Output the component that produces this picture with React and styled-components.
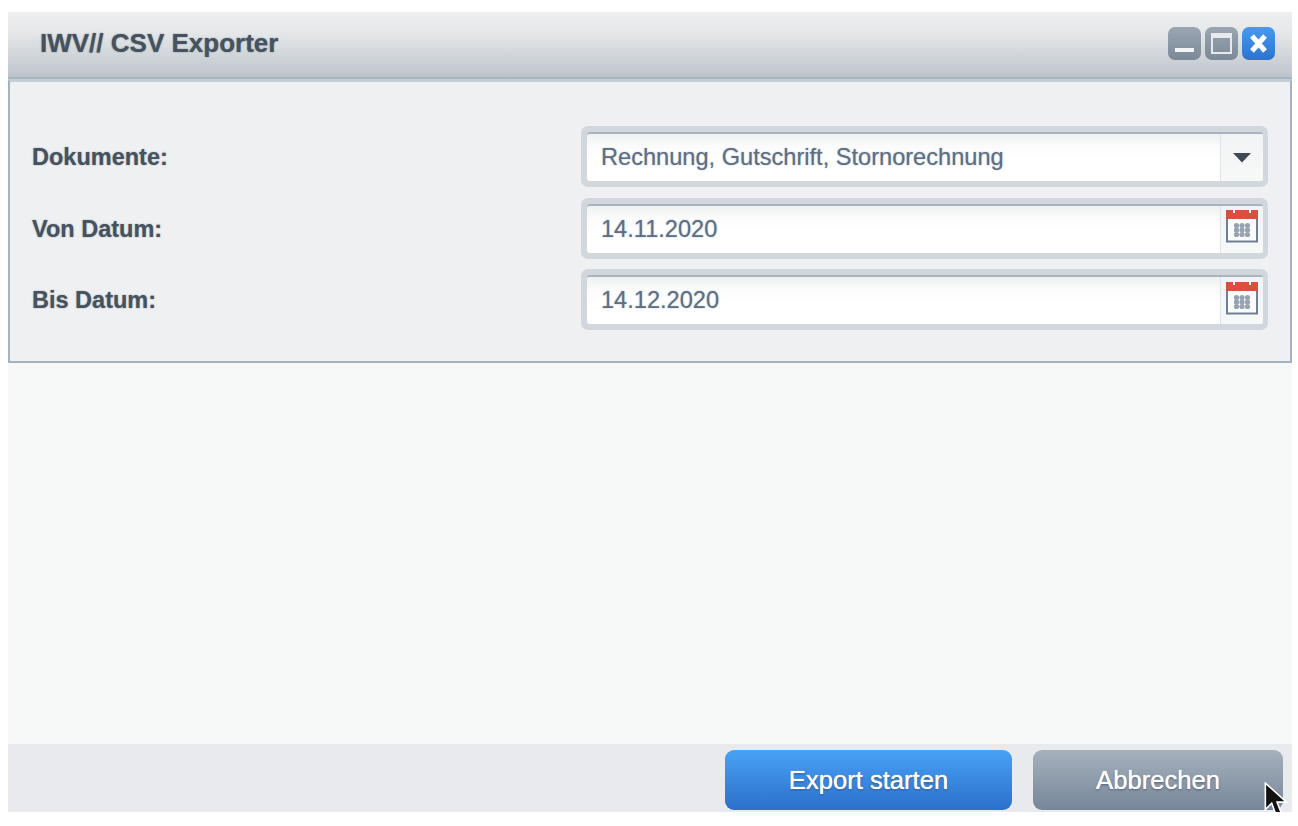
import React from 'react';
import styled, {createGlobalStyle} from 'styled-components';

const Global = createGlobalStyle`
  html, body {
    margin: 0;
    background: #fff;
    font-family: "Liberation Sans", Arial, sans-serif;
  }
`;

const Page = styled.div`
  width: 1298px;
  height: 826px;
  box-sizing: border-box;
  padding: 12px 6px 14px 8px;
`;
const Win = styled.div`
  position: relative;
  height: 100%;
  display: flex;
  flex-direction: column;
  overflow: hidden;
  background: #f7f9f9;
`;
const TitleBar = styled.div`
  height: 67px;
  flex: none;
  box-sizing: border-box;
  padding: 0 17px 3px 32px;
  display: flex;
  align-items: center;
  justify-content: space-between;
  background: linear-gradient(#eeeff0 0%, #e4e6e8 35%, #bcc4cb 100%);
  border-bottom: 2px solid #a8b6c2;
`;
const Title = styled.div`
  font-size: 26px;
  font-weight: bold;
  color: #46525e;
  text-shadow: 0 0 1.5px rgba(70, 82, 94, 0.7);
`;
const WinBtns = styled.div`
  display: flex;
  gap: 4px;
`;
const WinBtn = styled.div`
  width: 33px;
  height: 33px;
  border-radius: 7px;
  display: flex;
  align-items: center;
  justify-content: center;
  background: ${p => p.$close
    ? 'linear-gradient(#469af0, #2c73cf)'
    : 'linear-gradient(#9aa6b2, #7b8896)'};
`;
const Panel = styled.div`
  height: 284px;
  flex: none;
  box-sizing: border-box;
  padding: 44px 22px 0 22px;
  display: flex;
  flex-direction: column;
  gap: 10.5px;
  background: #eff0f2;
  border: 2px solid #a5b3c0;
  border-top: 3px solid #c5ced6;
`;
const Row = styled.div`
  display: flex;
  align-items: center;
  justify-content: space-between;
  height: 61px;
  flex: none;
`;
const Label = styled.label`
  padding-top: 2px;
  font-size: 23.5px;
  font-weight: bold;
  color: #46525e;
  text-shadow: 0 0 1.5px rgba(70, 82, 94, 0.6);
`;
const FieldWrap = styled.div`
  width: 687px;
  height: 61px;
  box-sizing: border-box;
  padding: 6px 5px 6px 6px;
  background: #d2d7dd;
  border-radius: 7px;
`;
const Field = styled.div`
  height: 100%;
  box-sizing: border-box;
  display: flex;
  border-radius: 3px;
  overflow: hidden;
  background: linear-gradient(#eef0f1 0, #fbfbfb 12px, #fff 24px);
  border-top: 2px solid #a9b4bf;
`;
const Value = styled.div`
  flex: 1;
  padding-left: 14px;
  display: flex;
  align-items: center;
  font-size: 23.6px;
  color: #5d6f84;
  text-shadow: 0 0 1.5px rgba(93, 111, 132, 0.6);
`;
const Trigger = styled.div`
  width: 42px;
  flex: none;
  display: flex;
  align-items: center;
  justify-content: center;
  border-left: 1px solid #dfe3e6;
  background: linear-gradient(#f2f3f4, #f7f8f8);
`;
const Calendar = styled.svg`
  margin-bottom: 6px;
`;
const Spacer = styled.div`
  flex: 1;
`;
const Footer = styled.div`
  height: 68px;
  flex: none;
  box-sizing: border-box;
  padding: 6px 9px 2px 0;
  display: flex;
  justify-content: flex-end;
  gap: 21px;
  background: #e9eaed;
`;
const Btn = styled.button`
  width: ${p => p.$w}px;
  height: 60px;
  border: 0;
  border-radius: 9px;
  font: 25.6px "Liberation Sans", Arial, sans-serif;
  color: #fff;
  text-shadow: 0 0 1px #fff, 0 1px 2px rgba(30, 50, 80, 0.7);
  background: ${p => p.$primary
    ? 'linear-gradient(#48a2f5, #2c6fcb)'
    : 'linear-gradient(#a6b1bc, #76869a)'};
`;
const Cursor = styled.svg`
  position: absolute;
  left: 1255px;
  top: 770px;
`;

const CalendarIcon = () => (
  <Calendar width="34" height="34" viewBox="0 0 34 34">
    <rect x="2" y="3" width="30" height="29.5" fill="#fbfbfb" stroke="#6f8094" strokeWidth="2" />
    <rect x="1" y="1" width="32" height="9" fill="#d9503f" />
    <rect x="8" y="0" width="2" height="4" fill="#fff" />
    <rect x="24" y="0" width="2" height="4" fill="#fff" />
    <g fill="#97a3b0">
      {[0, 1, 2].map(r => [0, 1, 2].map(c => (
        <circle key={r + '-' + c} cx={11.5 + c * 5.5} cy={16.5 + r * 4.5} r="2.6" />
      )))}
    </g>
  </Calendar>
);

const App = () => {
  return (
    <Page>
      <Global />
      <Win>
        <TitleBar>
          <Title>IWV// CSV Exporter</Title>
          <WinBtns>
            <WinBtn>
              <svg width="25" height="25" viewBox="0 0 25 25">
                <rect x="3" y="17" width="19" height="4" fill="#f2f4f6" />
              </svg>
            </WinBtn>
            <WinBtn>
              <svg width="25" height="25" viewBox="0 0 25 25">
                <rect x="3" y="3" width="19" height="19" fill="none" stroke="#e6eaee" strokeWidth="2" />
                <rect x="3" y="3" width="19" height="4" fill="#e6eaee" />
              </svg>
            </WinBtn>
            <WinBtn $close>
              <svg width="25" height="25" viewBox="0 0 25 25">
                <path d="M6 5 L19 20 M19 5 L6 20" stroke="#fff" strokeWidth="5" />
              </svg>
            </WinBtn>
          </WinBtns>
        </TitleBar>
        <Panel>
          <Row>
            <Label>Dokumente:</Label>
            <FieldWrap>
              <Field>
                <Value>Rechnung, Gutschrift, Stornorechnung</Value>
                <Trigger>
                  <svg width="18" height="10" viewBox="0 0 18 10">
                    <path d="M0 0 H18 L9 9.5 Z" fill="#3f4a56" />
                  </svg>
                </Trigger>
              </Field>
            </FieldWrap>
          </Row>
          <Row>
            <Label>Von Datum:</Label>
            <FieldWrap>
              <Field>
                <Value>14.11.2020</Value>
                <Trigger><CalendarIcon /></Trigger>
              </Field>
            </FieldWrap>
          </Row>
          <Row>
            <Label>Bis Datum:</Label>
            <FieldWrap>
              <Field>
                <Value>14.12.2020</Value>
                <Trigger><CalendarIcon /></Trigger>
              </Field>
            </FieldWrap>
          </Row>
        </Panel>
        <Spacer />
        <Footer>
          <Btn $primary $w={287}>Export starten</Btn>
          <Btn $w={250}>Abbrechen</Btn>
        </Footer>
        <Cursor width="28" height="36" viewBox="0 0 26 34">
          <path d="M2 1 L2 26 L8 20 L12 31 L17 29 L13 19 L22 19 Z" fill="#111" stroke="#fff" strokeWidth="1.5" />
        </Cursor>
      </Win>
    </Page>
  );
};

export default App;
